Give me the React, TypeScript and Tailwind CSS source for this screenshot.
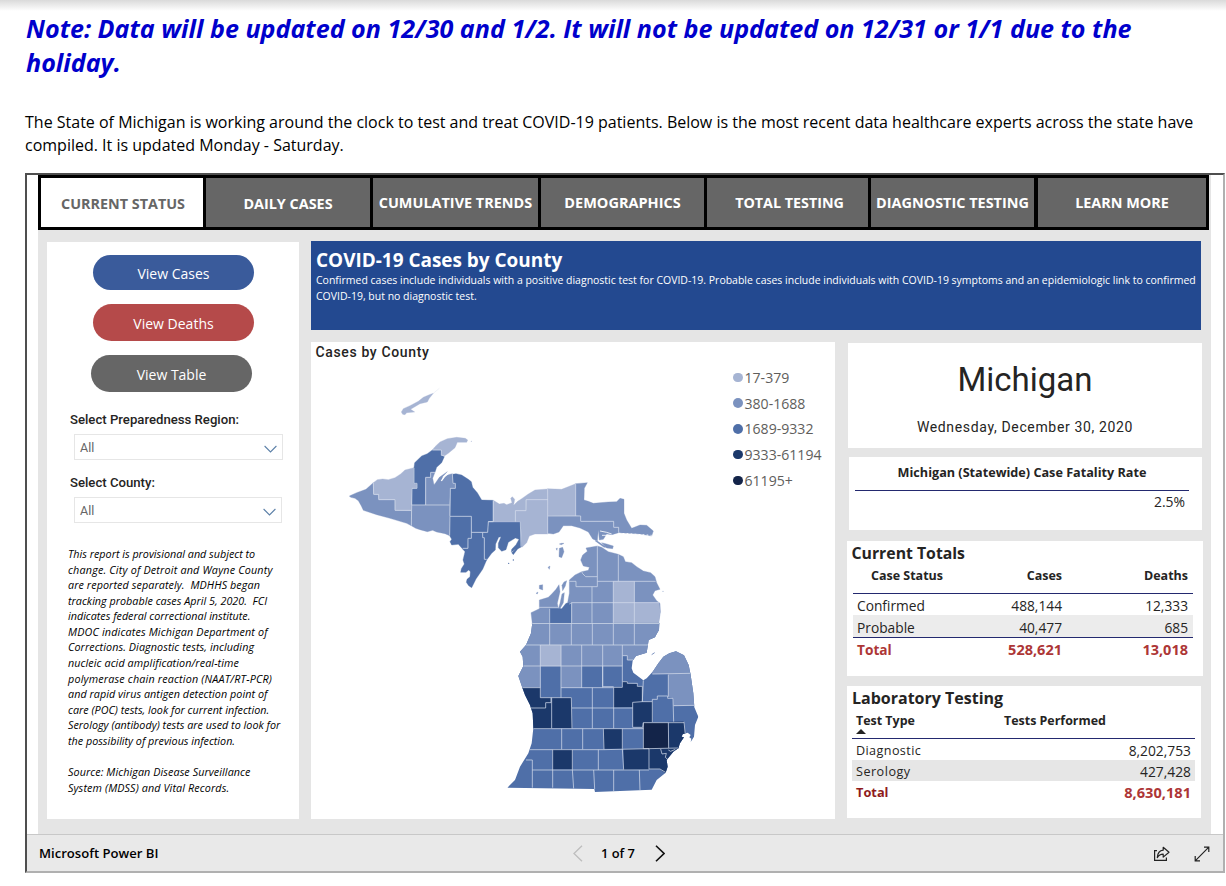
const LIGHT = '#a6b4d3';
const MID = '#7b92bf';
const BLUE = '#4f6fa8';
const NAVY = '#1b386a';
const INK = '#132449';

const tabs = [
  { label: 'CURRENT STATUS', cls: 'w-[162px] bg-white text-[#666666] text-[14.37px] pt-[2px] pl-[2px]' },
  { label: 'DAILY CASES', cls: 'w-[164px] bg-[#666666] text-white text-[14.4px] pt-[2px]' },
  { label: 'CUMULATIVE TRENDS', cls: 'w-[165px] bg-[#666666] text-white text-[14.45px]' },
  { label: 'DEMOGRAPHICS', cls: 'w-[163px] bg-[#666666] text-white text-[14.5px]' },
  { label: 'TOTAL TESTING', cls: 'w-[161px] pl-[4px] bg-[#666666] text-white text-[14.3px]' },
  { label: 'DIAGNOSTIC TESTING', cls: 'w-[163px] bg-[#666666] text-white text-[14.45px]' },
  { label: 'LEARN MORE', cls: 'w-[168px] ml-px bg-[#666666] text-white text-[14.4px]' },
];

const notes: [string, string][] = [
  ['This report is provisional and subject to', ''],
  ['change. City of Detroit and Wayne County', 'tracking-[0.19px]'],
  ['are reported separately.  MDHHS began', 'tracking-[0.09px]'],
  ['tracking probable cases April 5, 2020.  FCI', 'tracking-[0.02px]'],
  ['indicates federal correctional institute.', ''],
  ['MDOC indicates Michigan Department of', 'tracking-[0.16px]'],
  ['Corrections. Diagnostic tests, including', 'tracking-[0.08px]'],
  ['nucleic acid amplification/real-time', 'tracking-[0.09px]'],
  ['polymerase chain reaction (NAAT/RT-PCR)', 'tracking-[0.18px]'],
  ['and rapid virus antigen detection point of', 'tracking-[0.05px]'],
  ['care (POC) tests, look for current infection.', 'tracking-[0.02px]'],
  ['Serology (antibody) tests are used to look for', 'tracking-[0.02px]'],
  ['the possibility of previous infection.', ''],
];

const legend = [
  { label: '17-379', dot: 'bg-[#a6b4d3]' },
  { label: '380-1688', dot: 'bg-[#7b92bf]' },
  { label: '1689-9332', dot: 'bg-[#4f6fa8]' },
  { label: '9333-61194', dot: 'bg-[#1b386a]' },
  { label: '61195+', dot: 'bg-[#132449]' },
];

type Area = [string, string];

const upperWest: Area[] = [
  [LIGHT, '184,96 190,86 210,77 235,64 250,52 268,44 280,40 268,55 262,66 240,71 212,88 224,96 200,98 195,104 188,103'],
  [MID, '28,348 50,338 78,328 100,308 101,343 116,345 117,359 165,359 166,391 214,392 214,437 200,430 150,415 110,404 70,391 64,378 55,362 45,355 32,352'],
  [LIGHT, '100,308 112,299 128,297 145,299 165,293 182,282 195,270 222,263 222,310 231,312 231,325 216,326 214,392 166,391 165,359 117,359 116,345 101,343'],
  [BLUE, '222,263 224,248 245,228 262,221 277,210 304,210 305,226 313,230 305,248 290,262 285,277 272,278 272,292 257,293 256,375 216,375 216,326 231,325 231,312 222,310'],
  [LIGHT, '277,210 285,200 300,186 322,176 350,172 376,175 383,180 380,187 352,187 345,203 325,220 313,228 305,226 304,210'],
  [MID, '272,278 285,277 278,295 282,314 287,308 298,292 322,275 308,290 306,300 318,286 337,281 339,310 346,311 346,325 331,326 329,375 256,375 257,293 272,292'],
  [MID, '214,375 329,375 329,467 315,461 290,456 278,451 262,455 240,449 227,445 214,437'],
  [BLUE, '337,283 348,281 365,285 385,298 394,305 398,322 412,338 425,360 460,361 460,424 445,425 443,457 395,457 394,409 330,408 331,326 346,325 346,311 339,310'],
  [BLUE, '329,408 394,409 394,475 384,475 383,505 368,507 355,493 335,495 330,485 335,478 329,467'],
  [BLUE, '394,457 428,458 429,473 433,474 434,538 440,540 428,568 408,597 395,623 386,617 379,607 381,598 390,590 391,575 386,570 378,577 362,577 364,566 373,552 369,540 375,515 368,507 383,505 384,475 394,475'],
  [BLUE, '428,458 443,457 445,425 541,425 545,500 533,507 520,524 515,518 527,507 514,516 515,508 528,494 537,478 526,474 505,487 498,509 485,514 475,503 475,490 483,470 476,472 467,492 466,510 455,520 440,540 434,538 433,474 429,473'],
];

const upperEast: Area[] = [
  [LIGHT, '40,121 58,132 72,130 80,134 96,128 92,115 97,110 104,118 101,136 113,124 125,116 145,102 165,90 203,87 204,119 139,119 138,151 106,152 106,185 40,185'],
  [LIGHT, '106,185 106,152 138,151 139,119 204,119 204,222 165,222 148,228 140,248 126,262 122,185'],
  [LIGHT, '203,86 245,88 270,78 287,71 287,167 204,168'],
  [MID, '204,168 302,168 303,184 401,185 402,202 416,203 416,218 396,224 380,222 370,238 358,240 355,210 352,243 338,237 325,216 300,204 275,197 250,197 237,216 220,222 204,220'],
  [MID, '287,71 322,68 313,85 312,120 325,124 340,130 385,126 410,125 420,115 432,118 432,160 440,180 455,205 480,195 500,196 520,213 515,228 480,222 416,218 416,203 402,202 401,185 303,184 302,168 287,167'],
  [MID, '365,248 380,252 400,258 398,266 380,264'],
  [MID, '345,242 352,243 362,250 380,262 372,262 358,252'],
  [MID, '238,265 248,262 252,275 245,293 237,290'],
  [MID, '168,400 174,396 172,402'],
  [MID, '178,376 188,374 188,390 178,386'],
  [MID, '204,322 210,318 208,328'],
  [MID, '228,266 232,264 231,271'],
  [MID, '238,252 244,250 252,250 244,254'],
];

const lowerNorth: Area[] = [
  [MID, '318,264 352,258 365,262 385,275 415,283 430,290 436,305 455,308 470,320 490,333 512,338 525,350 530,368 540,388 525,392 518,405 530,422 540,430 541,455 535,492 157,492 153,458 178,446 178,420 205,412 215,402 228,388 237,374 240,395 232,430 235,446 240,430 246,402 253,398 250,428 240,446 250,448 262,432 268,400 268,370 268,360 285,345 305,335 325,331 328,322 310,318 302,300 308,285 322,274'],
  [MID, '246,376 252,366 260,362 256,378 248,392'],
  [BLUE, '209,446 245,446 258,430 273,428 273,491 209,491'],
  [LIGHT, '400,364 463,364 463,428 537,428 541,455 536,492 400,492'],
];

const lowerSouthOutline =
  '97,8 93,40 78,75 60,95 68,110 70,138 55,168 67,203 75,225 90,255 98,280 100,325 95,370 85,400 60,440 45,480 22,503 283,507 285,516 455,509 470,480 497,458 503,440 500,420 520,395 535,385 540,370 552,352 545,350 548,343 563,338 572,345 568,352 574,356 572,366 582,350 585,315 595,290 583,262 580,220 572,165 566,135 552,106 528,94 508,100 490,110 475,130 458,155 440,175 430,181 400,158 395,145 398,122 408,108 440,98 446,60 465,52 470,42 477,30 478,8';

const lowerSouth: Area[] = [
  [MID, '0,0 480,0 480,102 398,120 382,120 382,107 367,107 367,138 0,138'],
  [LIGHT, '121,75 183,75 183,138 121,138'],
  [MID, '0,138 121,138 121,203 0,203'],
  [MID, '183,138 245,138 245,203 183,203'],
  [MID, '450,80 600,80 600,162 457,162'],
  [MID, '505,162 600,160 600,256 520,258 520,235 505,230'],
  [NAVY, '40,203 121,203 121,233 153,233 153,248 137,249 136,264 92,265'],
  [NAVY, '80,265 136,264 137,249 155,248 155,326 90,326'],
  [NAVY, '155,233 214,233 216,325 155,325'],
  [NAVY, '341,202 367,202 367,185 382,184 382,190 412,192 412,199 427,199 427,245 398,247 397,261 341,262'],
  [NAVY, '398,247 457,245 458,306 430,308 428,322 399,322'],
  [NAVY, '310,327 367,327 367,386 312,386'],
  [NAVY, '158,389 217,389 217,448 158,448'],
  [NAVY, '371,388 447,386 447,448 371,449'],
  [NAVY, '447,386 545,382 545,410 510,470 480,447 447,447'],
  [INK, '430,308 505,308 506,384 430,386'],
  [NAVY, '506,306 552,305 556,345 545,388 506,384'],
];

const upperWestLines =
  'M100 308L101 343H116V359H165V391H214M222 263V310H231V325H216L214 437M277 210H304V226H313M285 277H272V292H257V375M214 375H329M337 281L339 310H346V325H331L329 467M330 409H394V475H384V505H368M394 457H443L445 425H460M428 458V473H433V538H440M445 425H541L543 500M460 361V425';
const upperEastLines =
  'M40 121V185M106 185V152H138V119H204M203 86V222M204 168H302V184H401V202H416V218M287 71V168';
const lowerNorthLines =
  'M352 258V380H288V364H268M305 335L308 341 317 350H352M352 364H527M415 283V364M400 364V492M463 364V492M336 380V492M275 492V428H540M275 428L268 432M177 442H235M209 446V492M155 491H538';
const lowerSouthLines =
  'M149 10V75M214 10V75M277 10V75M340 10V75M403 10V75M78 75H444M121 75V233M183 75V233M245 75V203M308 75V203M367 75V107H382V120H400M367 107V138M70 138H367M67 203H121M183 203H341M308 138V200H341M277 203V325M367 138V185H382V190H412V199H427V245M367 185V202H341V325M121 233H214L216 325M153 233V248H137V264H92M155 233V325M216 264H398M430 181L427 245L398 247V322H428L430 308H552M427 245H457V306M457 245V238H472V228H503V235H519L521 305M457 162L572 160M505 164V230M521 257L583 256M98 326H430M185 326V388M248 326V388M310 326L312 388M367 326V386L371 449M430 308V386H447V448M505 308L506 384M552 305L556 345M90 389H312L535 384M158 389V503M217 389V448L221 506M295 389V450M97 450H447M78 420H97V503M281 450L284 507M341 450V513M418 450L420 511M447 447H480L498 458M482 387L486 402 499 400 496 412 503 418M505 390L512 394 526 388';

const Areas = ({ items }: { items: Area[] }) => (
  <>
    {items.map(([fill, points]) => (
      <polygon key={points} points={points} fill={fill} stroke={fill} strokeWidth="1" strokeLinejoin="round" />
    ))}
  </>
);

function CountyMap() {
  const line = { fill: 'none', stroke: '#d3dbea', strokeWidth: 2.6, strokeOpacity: 0.85 };
  return (
    <svg className="mt-[18px] h-[420px] w-[360px] shrink-0" viewBox="340 380 360 420">
      <defs>
        <clipPath id="lower-south">
          <polygon points={lowerSouthOutline} />
        </clipPath>
      </defs>
      <g transform="translate(340 380) scale(.33333)">
        <Areas items={upperWest} />
        <path d={upperWestLines} {...line} />
        <path d="M280 40L298 25" stroke={LIGHT} strokeWidth="1" strokeOpacity="0.5" />
        <path d="M304 303Q312 288 328 278" fill="none" stroke="#fff" strokeWidth="4" />
        <circle cx="394" cy="184" r="1.5" fill={LIGHT} />
        <circle cx="506" cy="550" r="2" fill={BLUE} />
        <circle cx="520" cy="540" r="2" fill={BLUE} />
      </g>
      <g transform="translate(480 460) scale(.33333)">
        <Areas items={upperEast} />
        <path d={upperEastLines} {...line} />
        <path d="M360 213L380 217 395 222M366 226H384" fill="none" stroke="#fff" strokeWidth="2.5" />
        <path d="M416 220L440 221 480 224 515 226" fill="none" stroke="#fff" strokeWidth="3" strokeDasharray="5 7" />
        <Areas items={lowerNorth} />
        <path d={lowerNorthLines} {...line} />
        <circle cx="549" cy="394" r="1.5" fill={MID} />
      </g>
      <g transform="translate(500 620) scale(.33333)">
        <g clipPath="url(#lower-south)">
          <rect y="8" width="620" height="520" fill={BLUE} />
          <Areas items={lowerSouth} />
          <path d={lowerSouthLines} {...line} />
          <path d="M95 10.5H478" {...line} />
        </g>
        <path d="M455 104L464 98" stroke={MID} strokeWidth="3" />
      </g>
    </svg>
  );
}

function Select({ cls }: { cls: string }) {
  return (
    <div className={`flex h-[26px] items-center justify-between border border-[#e6e6e6] pl-[5px] ${cls}`}>
      <span className="pt-[2px] font-['Roboto',sans-serif] text-[12.5px] text-[#666]">All</span>
      <svg className="mt-[3px] h-[8px] w-[13px]" viewBox="0 0 13 8" fill="none" stroke="#5d80a8" strokeWidth="1.1">
        <path d="M.6 1l5.9 6 5.9-6" />
      </svg>
    </div>
  );
}

export default function App() {
  return (
    <div className="h-[886px] w-[1226px] overflow-hidden bg-white font-['Open_Sans','Noto_Sans',sans-serif] text-[#252423]">
      <div className="h-[11px] bg-gradient-to-b from-[#dadada] to-white" />
      <h2 className="pl-[26px] text-[25.12px] leading-[34px] font-bold whitespace-nowrap text-[#0000cc] italic">
        Note: Data will be updated on 12/30 and 1/2. It will not be updated on 12/31 or 1/1 due to the
        <br />
        holiday.
      </h2>
      <p className="mt-8 pl-[25px] text-[16px] leading-[23px] whitespace-nowrap text-black">
        The State of Michigan is working around the clock to test and treat COVID-19 patients. Below is the most recent data healthcare experts across the state have
        <br />
        compiled. It is updated Monday - Saturday.
      </p>

      <div className="mt-[16px] ml-[25px] flex h-[700px] w-[1200px] flex-col border-2 border-t-[#4f4f4f] border-r-[#b0b0b0] border-b-[#b0b0b0] border-l-[#4f4f4f] bg-white">
        <div className="ml-[11px] h-[659px] w-[1173px] bg-[#e5e5e5]">
          <nav className="flex h-[55px] w-[1171px] gap-[3px] bg-black p-[3px] font-bold">
            {tabs.map((t) => (
              <div key={t.label} className={`flex shrink-0 items-center justify-center whitespace-nowrap ${t.cls}`}>
                {t.label}
              </div>
            ))}
          </nav>

          <div className="flex pt-[11px] pl-[9px]">
            <aside className="mt-px h-[577px] w-[252px] bg-white pt-[13px]">
              <div className="ml-[46px] flex w-[161px] flex-col text-[14px] text-white">
                <div className="flex h-[35px] items-center justify-center rounded-full bg-[#3a5b9b] pt-[2px]">View Cases</div>
                <div className="mt-[14px] flex h-[37px] items-center justify-center rounded-full bg-[#b54a4a] pt-px">View Deaths</div>
                <div className="mt-[14px] -ml-[2px] flex h-[37px] w-[161px] items-center justify-center rounded-full bg-[#666666] pt-px">View Table</div>
              </div>
              <div className="mt-[18px] ml-[23px] h-[24px] font-['Roboto',sans-serif] text-[13.16px] leading-[20px] font-medium whitespace-nowrap">Select Preparedness Region:</div>
              <Select cls="ml-[27px] w-[209px] pr-[5px]" />
              <div className="mt-[13px] ml-[23px] h-[24px] font-['Roboto',sans-serif] text-[13.16px] leading-[20px] font-medium whitespace-nowrap">Select County:</div>
              <Select cls="ml-[27px] w-[208px] pr-[5px]" />
              <div className="mt-[23px] ml-[21px] text-[10.78px] leading-[15.57px] whitespace-pre text-black italic">
                {notes.map(([text, cls]) => (
                  <div key={text} className={cls}>{text}</div>
                ))}
                <div className="mt-[16px] tracking-[0.08px]">Source: Michigan Disease Surveillance</div>
                <div className="tracking-[0.12px]">System (MDSS) and Vital Records.</div>
              </div>
            </aside>

            <main className="ml-[12px]">
              <header className="h-[89px] w-[890px] bg-[#234990] pt-[7px] pl-[5px] whitespace-nowrap text-white">
                <h1 className="h-[24px] text-[18.95px] leading-[25px] font-bold">COVID-19 Cases by County</h1>
                <p className="text-[10.49px] leading-[16px]">
                  Confirmed cases include individuals with a positive diagnostic test for COVID-19. Probable cases include individuals with COVID-19 symptoms and an epidemiologic link to confirmed
                  <br />
                  COVID-19, but no diagnostic test.
                </p>
              </header>

              <div className="mt-3 flex">
                <section className="h-[477px] w-[524px] bg-white">
                  <h3 className="ml-[4.5px] h-[20px] font-['Roboto',sans-serif] text-[14px] leading-[21px] font-medium tracking-[0.64px]">Cases by County</h3>
                  <div className="flex pl-[29px]">
                    <CountyMap />
                    <ul className="mt-[2.5px] ml-[33px] text-[14.08px] text-[#605e5c]">
                      {legend.map((l) => (
                        <li key={l.label} className="flex h-[25.75px] items-center gap-[2px]">
                          <span className={`size-[9.5px] rounded-full ${l.dot}`} />
                          {l.label}
                        </li>
                      ))}
                    </ul>
                  </div>
                </section>

                <div className="mt-px ml-[12px] w-[356px]">
                  <section className="ml-px h-[105px] w-[354px] bg-white pt-[18px] text-center font-['Roboto',sans-serif]">
                    <div className="text-[33px] leading-[38px]">Michigan</div>
                    <div className="mt-[18px] text-[14px] leading-[20px] tracking-[0.65px]">Wednesday, December 30, 2020</div>
                  </section>

                  <section className="mt-[9px] ml-[2px] h-[73px] w-[353px] bg-white pt-[5px] pr-[13px] pl-[6px]">
                    <div className="h-[28px] text-center text-[12.65px] leading-[20px] font-bold">Michigan (Statewide) Case Fatality Rate</div>
                    <div className="border-t border-[#23296f] pr-[4px] text-right text-[13.9px] leading-[22px]">2.5%</div>
                  </section>

                  <section className="mt-[11px] h-[135px] w-[356px] bg-white pr-[10px] pl-[6px]">
                    <h3 className="-ml-[1.5px] text-[15.8px] leading-[24px] font-bold">Current Totals</h3>
                    <div className="flex h-[29px] border-b border-[#23296f] pl-[18px] text-[12.49px] leading-[22px] font-bold">
                      <span className="w-[81px]">Case Status</span>
                      <span className="w-[110px] text-right">Cases</span>
                      <span className="w-[126px] text-right">Deaths</span>
                    </div>
                    <div className="flex h-[21px] pl-[4px] text-[13.76px] leading-[23px]">
                      <span className="w-[95px]">Confirmed</span>
                      <span className="w-[110px] text-right">488,144</span>
                      <span className="w-[126px] text-right">12,333</span>
                    </div>
                    <div className="flex h-[23px] border-b border-[#23296f] bg-[#ececec] pl-[4px] text-[13.76px] leading-[25px]">
                      <span className="w-[95px]">Probable</span>
                      <span className="w-[110px] text-right">40,477</span>
                      <span className="w-[126px] text-right">685</span>
                    </div>
                    <div className="flex pl-[4px] text-[14.5px] leading-[23px] font-bold text-[#ad3636]">
                      <span className="w-[95px] text-[13.7px]">Total</span>
                      <span className="w-[110px] text-right">528,621</span>
                      <span className="w-[126px] text-right">13,018</span>
                    </div>
                  </section>

                  <section className="mt-[10px] h-[132px] w-[354px] bg-white pr-[6px] pl-[5px]">
                    <h3 className="text-[16px] leading-[24px] font-bold">Laboratory Testing</h3>
                    <div className="flex h-[29px] border-b border-[#23296f] pl-[4px] text-[12.44px] leading-[21px] font-bold">
                      <div className="w-[148px]">
                        Test Type
                        <svg className="-mt-[2px] h-[5px] w-[10px]" viewBox="0 0 10 5"><path d="M5 0l5 5H0z" fill="#252423" /></svg>
                      </div>
                      <span>Tests Performed</span>
                    </div>
                    <div className="flex h-[21px] justify-between px-[4px] text-[13.8px] leading-[23px]">
                      <span className="text-[12.6px] tracking-[0.4px]">Diagnostic</span>
                      <span>8,202,753</span>
                    </div>
                    <div className="flex h-[21px] justify-between bg-[#e6e6e6] px-[4px] text-[13.8px] leading-[23px]">
                      <span className="text-[12.6px] tracking-[0.5px]">Serology</span>
                      <span>427,428</span>
                    </div>
                    <div className="flex h-[22px] justify-between px-[4px] text-[14.6px] leading-[23px] font-bold text-[#ad3636]">
                      <span className="text-[12.8px] text-[#8f1b1b]">Total</span>
                      <span>8,630,181</span>
                    </div>
                  </section>
                </div>
              </div>
            </main>
          </div>
        </div>

        <footer className="flex h-[37px] items-center border-t border-[#c8c8c8] bg-[#e9e9e9] pl-[12px] text-black">
          <span className="w-[534px] pt-[2px] text-[13.1px] font-semibold">Microsoft Power BI</span>
          <svg className="mt-px h-[17px] w-[10px]" viewBox="0 0 10 17" fill="none" stroke="#bdbdbd" strokeWidth="1.3"><path d="M9 .7L1 8.5l8 7.8" /></svg>
          <span className="ml-[18px] w-[54px] pt-[2px] text-[12.9px] font-semibold">1 of 7</span>
          <svg className="mt-px h-[17px] w-[10px]" viewBox="0 0 10 17" fill="none" stroke="#111" strokeWidth="1.6"><path d="M1 .7l8 7.8-8 7.8" /></svg>
          <svg className="mt-px ml-[488px] h-[16px] w-[18px]" viewBox="0 0 18 16" fill="none" stroke="#222" strokeWidth="1.2">
            <path d="M4 4.6H1.6v9.8h11.8v-3" />
            <path d="M10.2 1.3l5.8 4.9-5.8 4.9V8.2C7.6 8.2 5.7 9.3 4.3 11.6 4.6 7.3 6.6 4.5 10.2 4.2z" strokeLinejoin="round" />
          </svg>
          <svg className="mt-px ml-[23px] h-[16px] w-[16px]" viewBox="0 0 16 16" fill="none" stroke="#222" strokeWidth="1.2">
            <path d="M1.2 14.8L14.8 1.2M10 1.2h4.8V6M1.2 10v4.8H6" />
          </svg>
        </footer>
      </div>
    </div>
  );
}
